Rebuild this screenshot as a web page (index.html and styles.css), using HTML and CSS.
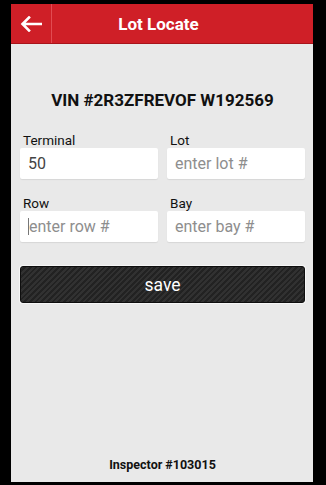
FILE: index.html
```html
<!DOCTYPE html>
<html>
<head>
<meta charset="utf-8">
<link rel="stylesheet" href="styles.css">
</head>
<body>
<div class="screen">
  <header class="topbar">
    <div class="back">
      <svg width="22" height="16" viewBox="0 0 22 16"><path d="M21 8H3M9 1.5L2.5 8L9 14.5" fill="none" stroke="#fff" stroke-width="2.6" stroke-linecap="square"/></svg>
    </div>
    <h1 class="title">Lot Locate</h1>
  </header>
  <main class="content">
    <h2 class="vin">VIN #2R3ZFREVOF W192569</h2>
    <div class="grid">
      <div class="field">
        <label class="label">Terminal</label>
        <div class="input value">50</div>
      </div>
      <div class="field">
        <label class="label">Lot</label>
        <div class="input placeholder">enter lot #</div>
      </div>
      <div class="field">
        <label class="label">Row</label>
        <div class="input placeholder"><span class="caret"></span>enter row #</div>
      </div>
      <div class="field">
        <label class="label">Bay</label>
        <div class="input placeholder">enter bay #</div>
      </div>
    </div>
    <button class="save">save</button>
    <div class="spacer"></div>
    <div class="inspector">Inspector #103015</div>
  </main>
</div>
</body>
</html>
```
FILE: styles.css
```css
html, body {
  margin: 0;
  padding: 0;
  background: #000;
}
body {
  font-family: Roboto, "Noto Sans", "Liberation Sans", sans-serif;
  width: 326px;
  height: 485px;
  overflow: hidden;
}
.screen {
  margin: 4px 0 0 11px;
  width: 302px;
  height: 478px;
  background: #e9e9e9;
  display: flex;
  flex-direction: column;
}
.topbar {
  height: 39px;
  background: #cf1f27;
  border-bottom: 1px solid #a8141b;
  display: flex;
  align-items: center;
}
.back {
  width: 40px;
  height: 39px;
  border-right: 1px solid #e24b52;
  display: flex;
  align-items: center;
  justify-content: center;
}
.title {
  margin: 0;
  flex: 1;
  text-align: center;
  color: #fff;
  font-size: 17px;
  font-weight: bold;
  padding-right: 48px;
}
.content {
  flex: 1;
  display: flex;
  flex-direction: column;
  padding: 0 8px 0 9px;
}
.vin {
  margin: 46px 0 0;
  text-align: center;
  font-size: 17px;
  font-weight: bold;
  color: #111;
  line-height: 20px;
}
.grid {
  margin-top: 22px;
  display: grid;
  grid-template-columns: 138px 138px;
  column-gap: 9px;
  row-gap: 16px;
}
.field {
  display: flex;
  flex-direction: column;
}
.label {
  font-size: 13.5px;
  color: #111;
  line-height: 16px;
  padding-left: 3px;
  margin-bottom: 0;
}
.input {
  height: 31px;
  background: #fff;
  border-radius: 2px;
  box-shadow: 0 1px 1px rgba(0,0,0,0.08);
  font-size: 16px;
  line-height: 31px;
  padding-left: 8px;
  display: flex;
  align-items: center;
}
.value { color: #444; }
.placeholder { color: #8e8e8e; }
.caret {
  display: inline-block;
  width: 1px;
  height: 17px;
  background: #777;
}
.save {
  margin-top: 24px;
  height: 37px;
  width: 285px;
  border: 1px solid #0e0e0e;
  border-radius: 3px;
  box-shadow: 0 0 0 1px #f6f6f6;
  background-color: #2a2a2a;
  background-image: repeating-linear-gradient(135deg, #313131 0 2px, #222 2px 4px);
  color: #fff;
  font-family: Roboto, "Noto Sans", "Liberation Sans", sans-serif;
  font-size: 17.5px;
  padding: 0;
}
.spacer { flex: 1; }
.inspector {
  text-align: center;
  font-size: 12.5px;
  font-weight: bold;
  color: #111;
  margin-bottom: 10px;
}
```
